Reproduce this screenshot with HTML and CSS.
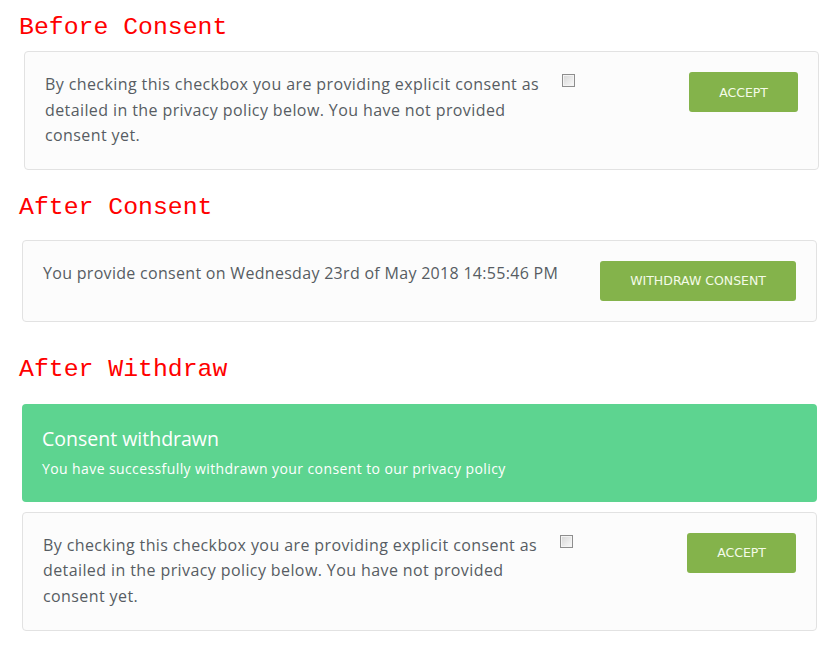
FILE: index.html
```html
<!DOCTYPE html>
<html lang="en">
<head>
    <meta charset="UTF-8">
    <meta name="viewport" content="width=device-width, initial-scale=1.0">
    <title>Consent states</title>
    <link rel="stylesheet" href="styles.css">
</head>
<body>
    <div class="page">
        <h2 class="state state_first">Before Consent</h2>
        <div class="card card_first">
            <p class="card_text">By checking this checkbox you are providing explicit consent as detailed in the privacy policy below. You have not provided consent yet.</p>
            <input type="checkbox" class="check">
            <button class="btn">Accept</button>
        </div>

        <h2 class="state state_second">After Consent</h2>
        <div class="card card_short">
            <p class="card_text card_line">You provide consent on Wednesday 23rd of May 2018 14:55:46 PM</p>
            <button class="btn">Withdraw consent</button>
        </div>

        <h2 class="state state_third">After Withdraw</h2>
        <div class="alert">
            <h4>Consent withdrawn</h4>
            <p>You have successfully withdrawn your consent to our privacy policy</p>
        </div>
        <div class="card">
            <p class="card_text">By checking this checkbox you are providing explicit consent as detailed in the privacy policy below. You have not provided consent yet.</p>
            <input type="checkbox" class="check">
            <button class="btn">Accept</button>
        </div>
    </div>
</body>
</html>
```

FILE: styles.css
```css
html, body {
    margin: 0;
    padding: 0;
    background: #ffffff;
}
.page {
    width: 795px;
    padding-left: 22px;
    padding-top: 1px;
    font-family: "Open Sans", sans-serif;
}
.state {
    font-family: "Liberation Mono", "Courier New", monospace;
    font-weight: normal;
    font-size: 24.8px;
    line-height: 29px;
    color: #ff0000;
    margin: 0 0 0 -3px;
}
.state_first {
    margin-top: 12px;
    margin-bottom: 9px;
}
.state_second {
    margin-top: 23px;
    margin-bottom: 18px;
}
.state_third {
    margin-top: 33px;
    margin-bottom: 20px;
}
.card {
    display: flex;
    align-items: flex-start;
    background: #fcfcfc;
    border: 1px solid #e2e2e2;
    border-radius: 4px;
    padding: 20px;
    margin-bottom: 10px;
}
.card_first {
    margin-left: 2px;
    margin-right: -2px;
}
.card_text {
    width: 506px;
    margin: 0;
    font-size: 16px;
    letter-spacing: 0.4px;
    line-height: 25.6px;
    color: #575c63;
}
.card_line {
    width: auto;
    letter-spacing: 0.3px;
}
.check {
    appearance: none;
    width: 13px;
    height: 13px;
    margin: 2px 0 0 11px;
    border: 1px solid #8e8e8e;
    box-sizing: border-box;
    background: linear-gradient(135deg, #d6d6d6, #fafafa);
    box-shadow: inset 0 0 0 1px #f4f4f4;
}
.btn {
    margin-left: auto;
    height: 40px;
    padding: 0 30px;
    background: #84b34b;
    border: none;
    border-radius: 3px;
    color: #f4fbe8;
    font-family: "DejaVu Sans", Verdana, sans-serif;
    font-size: 12.5px;
    text-transform: uppercase;
}
.alert {
    background: #5dd490;
    border-radius: 4px;
    padding: 20px 20px 22px;
    margin-bottom: 10px;
    color: #ffffff;
}
.alert h4 {
    margin: 0 0 4px;
    font-weight: normal;
    font-size: 19.5px;
    line-height: 30px;
}
.alert p {
    margin: 0;
    font-size: 14px;
    letter-spacing: 0.4px;
    line-height: 22px;
}
```
